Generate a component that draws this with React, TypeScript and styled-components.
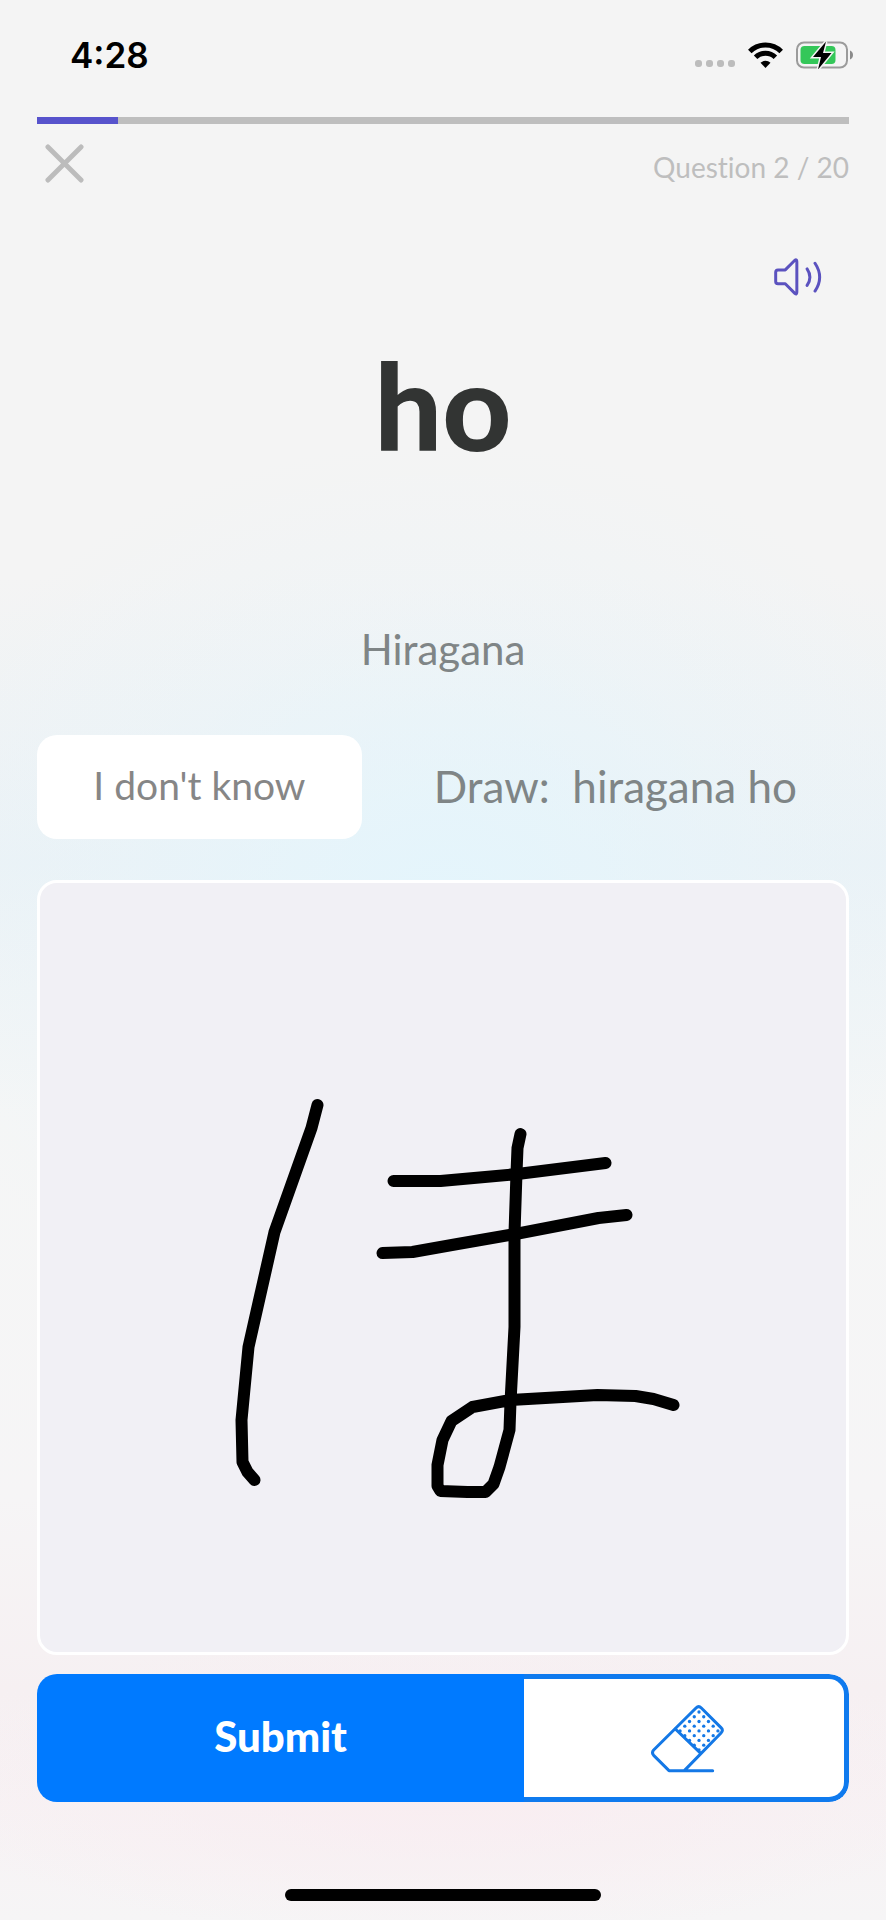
import React from "react";
import styled, { createGlobalStyle } from "styled-components";

const GlobalStyle = createGlobalStyle`
  *, *::before, *::after { box-sizing: border-box; }
  body { margin: 0; }
  button { font: inherit; cursor: pointer; }
`;

const Screen = styled.main`
  display: flex;
  flex-direction: column;
  min-height: 100vh;
  padding: 0 37px 19px;
  font-family: Lato, "Noto Sans CJK JP", sans-serif;
  font-variant-ligatures: none;
  color: #7f8586;
  background:
    radial-gradient(ellipse 64% 24% at 50% 47%, #e4f5fc 0%, #e4f5fcb0 25%, #e4f5fc40 60%, #e4f5fc00 100%),
    radial-gradient(ellipse 60% 8% at 50% 93%, #f9edf1 0%, #f9edf100 100%),
    linear-gradient(#f4f4f4 0%, #f4f4f4 30%, #ebf2f6 45%, #f5f6f6 58%, #f6f5f6 78%, #f6f0f2 88%, #f7f2f4 94%, #f6f5f6 100%);
`;

const StatusBar = styled.header`
  display: flex;
  align-items: center;
  justify-content: space-between;
  height: 109px;
  margin-right: -4px;
  padding: 0 0 0 33px;
  color: #000;
`;

const Clock = styled.time`
  font: 600 35px/40px Inter, sans-serif;
`;

const StatusIcons = styled.div`
  display: flex;
  align-items: center;
  gap: 13px;
`;

const Progress = styled.div`
  height: 7px;
  margin-top: 8px;
  background: #bebebe;
`;

const ProgressFill = styled.div`
  height: 100%;
  background: #5753cc;
`;

const QuizBar = styled.div`
  display: flex;
  align-items: flex-start;
  justify-content: space-between;
  height: 86px;
  padding-top: 12px;
`;

const IconButton = styled.button`
  display: flex;
  padding: 8px;
  margin: 0;
  border: 0;
  background: none;
`;

const Counter = styled.p`
  margin: 0;
  padding-top: 11px;
  font-size: 28px;
  line-height: 40px;
  color: #bebebe;
`;

const SoundRow = styled.div`
  display: flex;
  justify-content: flex-end;
  padding: 40px 19px 0 0;
`;

const Prompt = styled.h1`
  margin: 28px 0 0;
  font-size: 120px;
  line-height: 144px;
  font-weight: 900;
  text-align: center;
  color: #323433;
`;

const Script = styled.p`
  margin: 148px 0 0;
  font-size: 42px;
  line-height: 48px;
  text-align: center;
`;

const AnswerRow = styled.div`
  display: flex;
  gap: 20px;
  margin-top: 62px;
`;

const SkipButton = styled.button`
  flex: 0 0 40%;
  height: 104px;
  padding: 0 0 4px;
  border: 0;
  border-radius: 20px;
  background: #fff;
  color: #868686;
  font-size: 39px;
`;

const Task = styled.p`
  flex: 1;
  margin: 0;
  font-size: 44px;
  line-height: 102px;
  text-align: center;
  white-space: pre;
`;

const DrawingPad = styled.section`
  flex: 1 0 0;
  display: flex;
  min-height: 320px;
  margin-top: 41px;
  border: 3px solid #fff;
  border-radius: 20px;
  background: #f1f0f5;
`;

const Ink = styled.svg`
  flex: 1;
  width: 100%;
  min-height: 0;
  fill: none;
  stroke: #000;
  stroke-width: 12;
  stroke-linecap: round;
  stroke-linejoin: round;
`;

const Actions = styled.div`
  display: flex;
  height: 128px;
  margin-top: 19px;
  border-radius: 20px;
  overflow: hidden;
`;

const SubmitButton = styled.button`
  flex: 0 0 60%;
  padding: 0 0 4px;
  border: 0;
  background: #007aff;
  color: #fff;
  font-size: 42px;
  font-weight: 900;
`;

const EraseButton = styled.button`
  flex: 1;
  display: flex;
  align-items: center;
  justify-content: center;
  padding: 0 0 0 5px;
  border: 5px solid #0f7aee;
  border-left: 0;
  border-radius: 0 20px 20px 0;
  background: #fff;
`;

const HomeIndicator = styled.div`
  width: 39%;
  height: 12px;
  margin: 87px auto 0;
  border-radius: 6px;
  background: #000;
`;

const SignalDots = () => (
  <svg width="40" height="26" viewBox="0 0 40 26" fill="#bcbcbc" aria-hidden="true">
    {[0, 11, 22, 33].map((x) => (
      <rect key={x} x={x} y="18" width="7" height="7" rx="3" />
    ))}
  </svg>
);

const Wifi = () => (
  <svg width="35" height="26" viewBox="0 0 35 26" fill="none" stroke="#000" strokeWidth="5" aria-hidden="true">
    <path d="M1.8 9.5a22.3 22.3 0 0 1 31.4 0" />
    <path d="M7.6 15.2a14.2 14.2 0 0 1 19.8 0" />
    <path d="M17.5 26l-5-5.2a7.2 7.2 0 0 1 10 0z" fill="#000" stroke="none" />
  </svg>
);

const Battery = () => (
  <svg width="57" height="28" viewBox="0 0 57 28" aria-hidden="true">
    <rect x="1" y="1.5" width="50" height="25" rx="7" fill="none" stroke="#9b9b9b" strokeWidth="2" />
    <path d="M54 9.5c4 1.500 4 7.500 0 9z" fill="#8a8a8a" />
    <rect x="4.500" y="5" width="35" height="18" rx="4" fill="#34c759" />
    <path d="M30 .5L17 16h8l-3 12.500L35.500 12H27z" fill="#000" stroke="#f4f4f4" strokeWidth="3" paintOrder="stroke" />
  </svg>
);

const Cross = () => (
  <svg width="39" height="39" viewBox="0 0 40 40" stroke="#bcbcbc" strokeWidth="5" strokeLinecap="round" aria-hidden="true">
    <path d="M3 3l34 34M37 3L3 37" />
  </svg>
);

const Speaker = () => (
  <svg
    width="49"
    height="39"
    viewBox="88 82 146 118"
    fill="none"
    stroke="#5b52bf"
    strokeWidth="9"
    strokeLinecap="round"
    strokeLinejoin="round"
    aria-hidden="true"
  >
    <path d="M124 118h-22q-7 0-7 7v28q0 7 7 7h22l29 29q6 5 6-3V93q0-8-6-4z" />
    <path d="M190 115q17 25 0 50M214 98q28 42 0 84" />
  </svg>
);

const gripRows = [0, 1, 2, 3, 4];

const Eraser = () => (
  <svg
    width="74"
    height="69"
    viewBox="58 38 222 207"
    fill="none"
    stroke="#1478e6"
    strokeWidth="9"
    strokeLinecap="round"
    strokeLinejoin="round"
    aria-hidden="true"
  >
    <path d="M161 238L271 125q8-8 0-16l-59-59q-8-8-16 0L69 176q-7 8 0 16l46 46h131" />
    <path d="M134 113l74 71" />
    <g fill="#1478e6" stroke="none">
      {gripRows.map((i) =>
        gripRows.map((j) => (
          <circle key={`${i}-${j}`} cx={205 + (i - j) * 14.2} cy={62 + (i + j) * 14.2} r="5" />
        ))
      )}
    </g>
  </svg>
);

const strokes = [
  "280,225 274,248 237,352 211,467 204,540 205,582 210,592 217,600",
  "356,301 403,301 480,294 568,283",
  "345,373 375,372 420,364 478,354 561,338 589,335",
  "483,254 480,268 479,293 477,353 477,447 473,522 472,550 462,587 456,604 448,612 430,612 403,611 400,606 400,585 405,560 414,541 435,527 473,520 560,515 598,516 616,519 636,525",
];

export default function App() {
  const question = 2;
  const total = 20;

  return (
    <>
      <GlobalStyle />
      <Screen>
        <StatusBar>
          <Clock>4:28</Clock>
          <StatusIcons>
            <SignalDots />
            <Wifi />
            <Battery />
          </StatusIcons>
        </StatusBar>
        <Progress role="progressbar" aria-label="Quiz progress" aria-valuenow={question} aria-valuemax={total}>
          <ProgressFill style={{ width: `${(question / total) * 100}%` }} />
        </Progress>
        <QuizBar>
          <IconButton type="button" aria-label="Close">
            <Cross />
          </IconButton>
          <Counter>
            Question {question} / {total}
          </Counter>
        </QuizBar>
        <SoundRow>
          <IconButton type="button" aria-label="Play sound">
            <Speaker />
          </IconButton>
        </SoundRow>
        <Prompt>ho</Prompt>
        <Script>Hiragana</Script>
        <AnswerRow>
          <SkipButton type="button">I don't know</SkipButton>
          <Task>{"Draw:  hiragana ho"}</Task>
        </AnswerRow>
        <DrawingPad aria-label="Drawing area">
          <Ink viewBox="3 3 805 769" role="img" aria-label="Handwritten character">
            {strokes.map((points) => (
              <polyline key={points} points={points} />
            ))}
          </Ink>
        </DrawingPad>
        <Actions>
          <SubmitButton type="button">Submit</SubmitButton>
          <EraseButton type="button" aria-label="Erase">
            <Eraser />
          </EraseButton>
        </Actions>
        <HomeIndicator />
      </Screen>
    </>
  );
}
